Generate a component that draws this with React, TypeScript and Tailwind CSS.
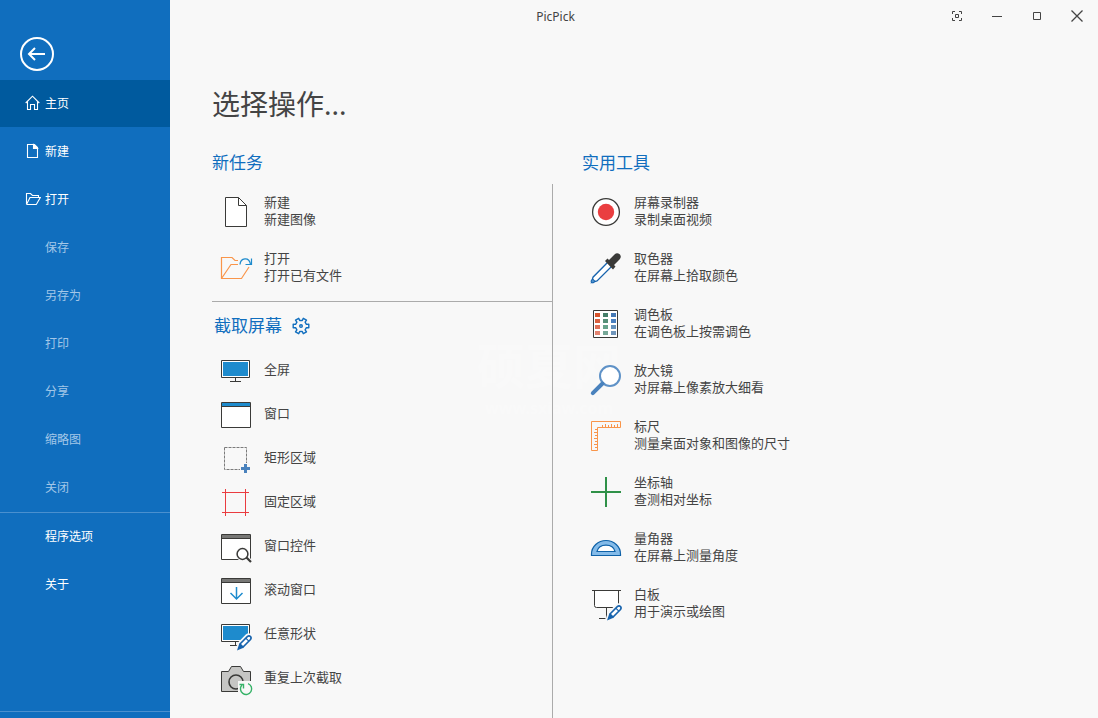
import React from 'react';

type Item = {
  title: string;
  description?: string;
  icon: React.ReactNode;
};

type MenuItem = {
  label: string;
  icon?: React.ReactNode;
  active?: boolean;
  muted?: boolean;
};

const DARK = '#3a3a38';
const BLUE = '#1e8bcd';

const Icon: React.FC<{ children: React.ReactNode }> = ({ children }) => (
  <svg viewBox="0 0 32 32" className="w-8 h-8 shrink-0 overflow-visible" fill="none" aria-hidden="true">
    {children}
  </svg>
);

const Pencil = () => (
  <g>
    <path d="M17 32 L19 25.5 L27 17.5 Q29 16 31 18 Q33 20 31 22 L23 30 Z" fill="#f8f8f8" stroke="#f8f8f8" strokeWidth="3" />
    <path d="M20 26 L27.3 18.7 Q29 17.2 30.5 18.6 Q31.8 20.2 30.3 21.7 L23 29 Z" fill="#fff" stroke="#1763ad" strokeWidth="1.6" />
    <path d="M25.8 20.2 L28.8 23.2" stroke="#1763ad" strokeWidth="1.2" />
    <path d="M17 32.5 L19.3 25.5 L23.5 29.7 Z" fill="#1763ad" />
  </g>
);

const Monitor = () => (
  <g>
    <path d="M1.5 6.5H29.5V23.5H1.5Z" fill="#fff" stroke={DARK} />
    <path d="M3 8H28V22H3Z" fill={BLUE} />
    <path d="M15.5 24V27M10 27.5H21" stroke={DARK} />
  </g>
);

const WindowFrame: React.FC<{ bar: string }> = ({ bar }) => (
  <g>
    <path d="M1.5 4.5H30.5V29.5H1.5Z" fill="#fff" stroke={DARK} />
    <path d="M2 5H30V8H2Z" fill={bar} />
    <path d="M2 8.5H30" stroke={DARK} />
  </g>
);

const menu: MenuItem[] = [
  {
    label: '主页',
    active: true,
    icon: <path d="M0.7 8 L7.5 1.2 L14.3 8 M2.5 6.5V14.5H5.5V9.5H9.5V14.5H12.5V6.5" />,
  },
  {
    label: '新建',
    icon: (
      <>
        <path d="M2.5 1.5H9.5L12.5 4.5V14.5H2.5Z" />
        <path d="M8.5 1.5V5.5H12.5Z" fill="#fff" />
      </>
    ),
  },
  {
    label: '打开',
    icon: <path d="M1.5 13.5V2.5H5.5L7.5 4.5H13.5V6.5M1.5 13.5L5 6.5H15.3L11.3 13.5H1.5" />,
  },
  { label: '保存', muted: true },
  { label: '另存为', muted: true },
  { label: '打印', muted: true },
  { label: '分享', muted: true },
  { label: '缩略图', muted: true },
  { label: '关闭', muted: true },
];

const extraMenu: MenuItem[] = [{ label: '程序选项' }, { label: '关于' }];

const tasks: Item[] = [
  {
    title: '新建',
    description: '新建图像',
    icon: (
      <>
        <path d="M5.5 1.5H18.5L26.5 9.5V30.5H5.5Z" fill="#fff" stroke={DARK} />
        <path d="M18.5 1.5V9.5H26.5" stroke={DARK} />
      </>
    ),
  },
  {
    title: '打开',
    description: '打开已有文件',
    icon: (
      <>
        <path d="M18 8.5H15L12 5.5H1.5V26.5H21.5L29 15M1.5 26.5L11 12.5H18" stroke="#f9954a" strokeWidth="1.2" />
        <path d="M20 12.5C20.5 5.5 29 4.5 30.5 12" stroke={BLUE} strokeWidth="1.3" />
        <path d="M25.5 12.5H31.5V6.5" stroke={BLUE} strokeWidth="1.2" />
      </>
    ),
  },
];

const captures: Item[] = [
  { title: '全屏', icon: <Monitor /> },
  { title: '窗口', icon: <WindowFrame bar={BLUE} /> },
  {
    title: '矩形区域',
    icon: (
      <>
        <path d="M4.5 5.5H26.5V21M4.5 5.5V27.5H20" stroke="#7b7b7b" strokeDasharray="3 1" />
        <path d="M24 22H27V25H30V28H27V31H24V28H21V25H24Z" fill="#4a82bd" />
      </>
    ),
  },
  { title: '固定区域', icon: <path d="M5.5 3V30M25.5 3V30M2 6.5H29M2 26.5H29" stroke="#ea3c40" /> },
  {
    title: '窗口控件',
    icon: (
      <>
        <WindowFrame bar="#777775" />
        <circle cx="22.5" cy="24" r="7" fill="#f8f8f8" />
        <path d="M26 27L31 32" stroke="#f8f8f8" strokeWidth="4" />
        <circle cx="22.5" cy="24" r="5.4" fill="#fff" stroke={DARK} strokeWidth="1.5" />
        <path d="M26.5 27.5L31 32" stroke={DARK} strokeWidth="2.2" />
      </>
    ),
  },
  {
    title: '滚动窗口',
    icon: (
      <>
        <WindowFrame bar="#777775" />
        <path d="M16.5 13V24.5M10.5 19L16.5 25L22.5 19" stroke={BLUE} strokeWidth="1.5" />
      </>
    ),
  },
  {
    title: '任意形状',
    icon: (
      <>
        <Monitor />
        <Pencil />
      </>
    ),
  },
  {
    title: '重复上次截取',
    icon: (
      <>
        <path d="M1.5 9.5H8.5L11.5 4.5H20.5L23.5 9.5H30.5V29.5H1.5Z" fill="#c6c6c4" stroke={DARK} />
        <circle cx="16" cy="20" r="7" stroke={DARK} strokeWidth="1.6" />
        <path d="M18 19H33V34H18Z" fill="#f8f8f8" />
        <path d="M28 21.6A5.6 5.6 0 1 1 22 23" stroke="#35b267" strokeWidth="1.4" />
        <path d="M19.5 22.5H23.5V26.5" stroke="#35b267" strokeWidth="1.4" />
      </>
    ),
  },
];

const swatches = [
  ['#d8532b', '#457f6a', '#4478b4'],
  ['#d9603f', '#559078', '#4a80c0'],
  ['#de7058', '#66a38b', '#6592bd'],
  ['#e38471', '#77a898', '#7096bb'],
];

const tools: Item[] = [
  {
    title: '屏幕录制器',
    description: '录制桌面视频',
    icon: (
      <>
        <circle cx="16" cy="16" r="13.4" fill="#fff" stroke={DARK} strokeWidth="1.3" />
        <circle cx="16" cy="16" r="8.2" fill="#ea3e40" />
      </>
    ),
  },
  {
    title: '取色器',
    description: '在屏幕上拾取颜色',
    icon: (
      <>
        <path d="M18 10L3 25.2L1.5 30.5L7 29L22 14" fill="#fff" stroke="#1763ad" strokeWidth="1.3" />
        <circle cx="2.8" cy="29.2" r="1.7" fill="#4d93d0" stroke="#1763ad" />
        <path d="M15 9L17.5 6.5L19 8L24.5 2.5Q27 0 29.7 2.3Q32 5 29.5 7.5L24 13L25.5 14.5L23 17.5Z" fill={DARK} />
      </>
    ),
  },
  {
    title: '调色板',
    description: '在调色板上按需调色',
    icon: (
      <>
        <path d="M3.5 2.5H27.5V29.5H3.5Z" fill="#fff" stroke={DARK} />
        {swatches.map((row, y) =>
          row.map((color, x) => (
            <rect key={color} x={5 + x * 8} y={5 + y * 6} width="5" height="4" fill={color} />
          ))
        )}
      </>
    ),
  },
  {
    title: '放大镜',
    description: '对屏幕上像素放大细看',
    icon: (
      <>
        <circle cx="20" cy="12" r="10" fill="#fff" stroke="#5f92c7" strokeWidth="2" />
        <path d="M12.5 19.5L2.8 29.2" stroke="#4a82bd" strokeWidth="4" strokeLinecap="round" />
      </>
    ),
  },
  {
    title: '标尺',
    description: '测量桌面对象和图像的尺寸',
    icon: (
      <path
        d="M1.5 1.5H30.5V7.5H7.5V30.5H1.5ZM12.5 5V7M15.5 4V7M18.5 5V7M21.5 4V7M24.5 5V7M27.5 4V7M5 9.5H7M4 12.5H7M5 15.5H7M4 18.5H7M5 21.5H7M4 24.5H7M5 27.5H7"
        stroke="#f9954a"
      />
    ),
  },
  {
    title: '坐标轴',
    description: '查测相对坐标',
    icon: <path d="M16 1V31M1 16H31" stroke="#2f9148" strokeWidth="2" />,
  },
  {
    title: '量角器',
    description: '在屏幕上测量角度',
    icon: (
      <>
        <path d="M1.5 23.5V22A14.5 13.5 0 0 1 30.5 22V23.5Z" fill="#84bbe9" stroke="#0f62a8" strokeWidth="1.2" />
        <path d="M7 19.5C9 11 23 11 25 19.5Z" fill="#fff" stroke="#0f62a8" strokeWidth="1.2" />
      </>
    ),
  },
  {
    title: '白板',
    description: '用于演示或绘图',
    icon: (
      <>
        <path d="M4.5 3V17.5Q4.5 19.5 6.5 19.5H25.5Q28.5 19.5 28.5 16.5V3" fill="#fff" stroke={DARK} />
        <path d="M2 2.5H31M16.5 20V30.5M9 30.5H15.5" stroke={DARK} />
        <Pencil />
      </>
    ),
  },
];

const MenuButton: React.FC<{ item: MenuItem }> = ({ item }) => (
  <li className="h-12">
    <button
      type="button"
      className={`flex items-center w-full h-[47px] pl-[25px] text-left text-xs ${
        item.active ? 'bg-[#005a9e]' : 'hover:bg-[#005a9e]'
      } ${item.muted ? 'text-[#a3c7e8]' : 'text-white'}`}
    >
      <span className="w-5 shrink-0 pb-px">
        {item.icon && (
          <svg viewBox="0 0 16 16" className="w-4 h-4" fill="none" stroke="#fff" strokeWidth="1.1" aria-hidden="true">
            {item.icon}
          </svg>
        )}
      </span>
      {item.label}
    </button>
  </li>
);

const ActionButton: React.FC<{ item: Item }> = ({ item }) => (
  <button
    type="button"
    className={`flex items-center gap-3 w-full pl-2 text-left text-[13px] leading-[17px] hover:bg-black/5 ${
      item.description ? 'h-14' : 'h-11'
    }`}
  >
    <Icon>{item.icon}</Icon>
    <span className="pb-0.5">
      <span className="block">{item.title}</span>
      {item.description && <span className="block">{item.description}</span>}
    </span>
  </button>
);

export default function App() {
  return (
    <div className="relative isolate flex min-h-screen bg-[#f8f8f8] text-[#444] font-['Noto_Sans','Noto_Sans_CJK_SC',sans-serif]">
      {/* Watermark */}
      <div className="absolute -z-10 left-1/2 top-[332px] -translate-x-1/2 pointer-events-none text-center font-bold text-white/25">
        <div className="text-5xl leading-[68px]">硕夏网</div>
        <div className="text-base leading-4">www.sxiaw.com</div>
      </div>

      <aside className="flex flex-col w-[170px] shrink-0 bg-[#106ebe]">
        <div className="h-20 pt-9 pl-5">
          <button type="button" aria-label="返回" className="block">
            <svg viewBox="0 0 36 36" className="w-9 h-9" fill="none" stroke="#fff" strokeWidth="2">
              <circle cx="17" cy="18" r="16" />
              <path d="M25 18H9M15 12L9 18L15 24" />
            </svg>
          </button>
        </div>
        <nav className="flex flex-col flex-1">
          <ul>
            {menu.map((item) => (
              <MenuButton key={item.label} item={item} />
            ))}
          </ul>
          <ul className="border-t border-[#4a90cf]">
            {extraMenu.map((item) => (
              <MenuButton key={item.label} item={item} />
            ))}
          </ul>
          <div className="mt-auto h-[7px] border-t border-[#4a90cf]" />
        </nav>
      </aside>

      <div className="flex flex-col flex-1 min-w-0">
        <header className="flex items-center h-8 pl-1 pr-px">
          <div className="flex-1 pt-0.5 text-center text-xs">PicPick</div>
          <button type="button" aria-label="全屏截取" className="flex items-center justify-center w-10 h-8">
            <svg viewBox="0 0 10 10" className="w-[10px] h-[10px]" fill="none" stroke="#444">
              <path d="M0.5 3V0.5H3M7 0.5H9.5V3M9.5 7V9.5H7M3 9.5H0.5V7M3.5 3.5H6.5V6.5H3.5Z" />
            </svg>
          </button>
          <button type="button" aria-label="最小化" className="flex items-center justify-center w-10 h-8">
            <svg viewBox="0 0 10 10" className="w-[10px] h-[10px]" stroke="#444">
              <path d="M0 5.5H10" />
            </svg>
          </button>
          <button type="button" aria-label="最大化" className="flex items-center justify-center w-10 h-8">
            <svg viewBox="0 0 8 8" className="w-2 h-2" fill="none" stroke="#444">
              <path d="M0.5 0.5H7.5V7.5H0.5Z" />
            </svg>
          </button>
          <button type="button" aria-label="关闭窗口" className="flex items-center justify-center w-10 h-8">
            <svg viewBox="0 0 12 12" className="w-3 h-3" stroke="#444" strokeWidth="1.3">
              <path d="M0.5 0.5L11.5 11.5M11.5 0.5L0.5 11.5" />
            </svg>
          </button>
        </header>

        <main className="flex flex-col flex-1 pt-12 pl-[42px]">
          <h1 className="text-[28px] leading-[48px]">选择操作...</h1>
          <div className="flex flex-1 pt-3">
            <div className="flex flex-col w-[341px] shrink-0">
              <h2 className="h-11 pt-[11px] text-[17px] leading-6 text-[#106ebe]">新任务</h2>
              <div className="flex-1 border-r border-[#ababab]">
                <section className="pb-[5px] border-b border-[#ababab]">
                  {tasks.map((item) => (
                    <ActionButton key={item.title} item={item} />
                  ))}
                </section>
                <section>
                  <div className="flex items-center gap-2.5 h-[46px] pt-0.5 pl-0.5">
                    <h2 className="text-[17px] leading-6 text-[#106ebe]">截取屏幕</h2>
                    <button type="button" aria-label="截取设置">
                      <svg viewBox="0 0 18 18" className="w-[18px] h-[18px]" fill="none" stroke="#106ebe" strokeWidth="1.4">
                        <path
                          d="M16.8 7.2V10.8L14.4 10.6 13.1 12.8 14.5 14.9 11.3 16.7 10.3 14.5H7.7L6.7 16.7 3.5 14.9 4.9 12.8 3.6 10.6 1.2 10.8V7.2L3.6 7.4 4.9 5.2 3.5 3.1 6.7 1.3 7.7 3.5H10.3L11.3 1.3 14.5 3.1 13.1 5.2 14.4 7.4Z"
                          strokeLinejoin="round"
                        />
                        <circle cx="9" cy="9" r="1.3" />
                      </svg>
                    </button>
                  </div>
                  {captures.map((item) => (
                    <ActionButton key={item.title} item={item} />
                  ))}
                </section>
              </div>
            </div>

            <section className="flex-1 min-w-0 pl-[29px]">
              <h2 className="h-11 pt-[11px] text-[17px] leading-6 text-[#106ebe]">实用工具</h2>
              {tools.map((item) => (
                <ActionButton key={item.title} item={item} />
              ))}
            </section>
          </div>
        </main>
      </div>
    </div>
  );
}
